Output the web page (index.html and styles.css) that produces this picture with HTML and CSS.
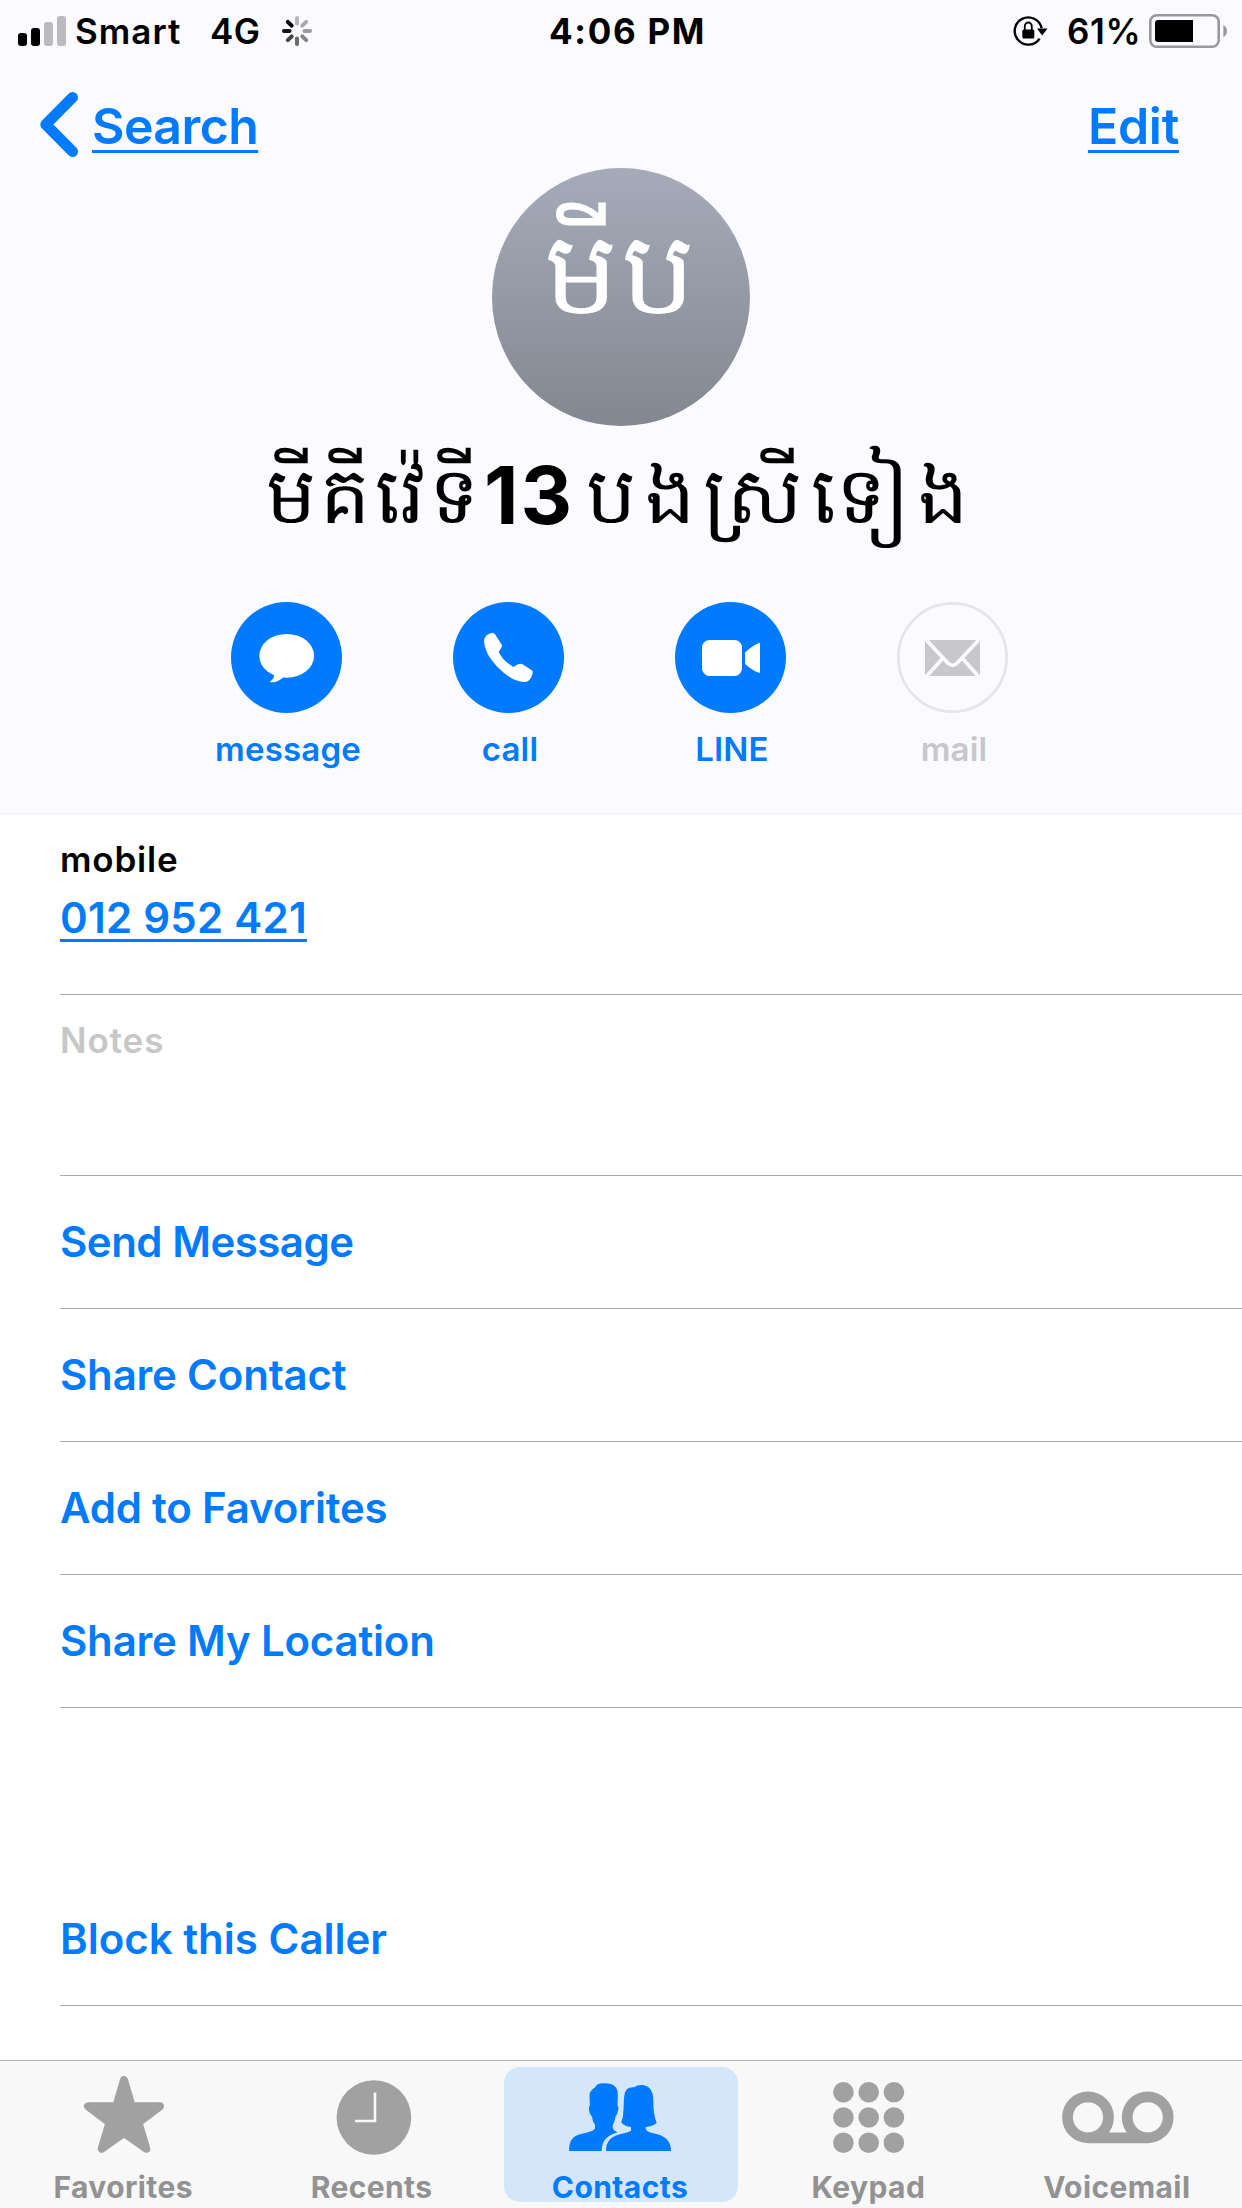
FILE: index.html
```
<!DOCTYPE html>
<html lang="en">
<head>
<meta charset="utf-8">
<title>Contact</title>
<link rel="stylesheet" href="styles.css">
</head>
<body>
<div class="screen">
  <header class="header">
    <div class="status">
      <div class="status-left">
        <svg class="signal" width="48" height="32" viewBox="0 0 48 32">
          <rect x="0" y="18" width="9" height="13" rx="3"/>
          <rect x="13" y="13" width="9" height="18" rx="3"/>
          <rect class="dim" x="26" y="7" width="9" height="24" rx="3"/>
          <rect class="dim" x="39" y="1" width="9" height="30" rx="3"/>
        </svg>
        <span class="carrier">Smart</span>
        <span class="network">4G</span>
        <svg class="spinner" width="30" height="30" viewBox="-15 -15 30 30">
          <path stroke="#b5b5ba" d="M0-7.5V-13"/>
          <path stroke="#aaaaae" d="M5.3-5.3L9.2-9.2"/>
          <path stroke="#9c9ca0" d="M7.5 0H13"/>
          <path stroke="#858588" d="M5.3 5.3L9.2 9.2"/>
          <path stroke="#68686b" d="M0 7.5V13"/>
          <path stroke="#444446" d="M-5.3 5.3L-9.2 9.2"/>
          <path stroke="#111111" d="M-7.5 0H-13"/>
          <path stroke="#000000" d="M-5.3-5.3L-9.2-9.2"/>
        </svg>
      </div>
      <span class="time">4:06 PM</span>
      <div class="status-right">
        <svg class="lock" width="36" height="32" viewBox="0 0 36 32">
          <path d="M28.6 13.2A13.6 13.6 0 1 0 26.6 23.6" fill="none" stroke="#000" stroke-width="2.4"/>
          <path d="M24 13.5H34.5L29.2 20.5Z"/>
          <rect x="9.3" y="14.5" width="12" height="9" rx="1.5"/>
          <path d="M11.8 15V11.3a3.5 3.8 0 0 1 7 0V15" fill="none" stroke="#000" stroke-width="1.8"/>
        </svg>
        <span class="percent">61%</span>
        <svg class="battery" width="79" height="34" viewBox="0 0 79 34">
          <rect x="1.3" y="1.3" width="68.4" height="31.4" rx="6.5" fill="none" stroke="#98989b" stroke-width="2.6"/>
          <path d="M9 6H44V28H9Q6 28 6 25V9Q6 6 9 6Z"/>
          <path d="M74.3 11Q78 13 78 17T74.3 23Z" fill="#98989b"/>
        </svg>
      </div>
    </div>
    <nav class="nav">
      <a class="back">
        <svg width="40" height="67" viewBox="0 0 40 67"><path d="M33.5 6.5L6.8 33.5L33.5 60.5" fill="none" stroke="#007aff" stroke-width="11" stroke-linecap="round" stroke-linejoin="round"/></svg>
        <span class="link">Search</span>
      </a>
      <a class="link edit">Edit</a>
    </nav>
    <div class="avatar">មីប</div>
    <h1 class="name"><span class="name-first">មីគីវ៉េទី</span><span class="name-number">13</span><span class="name-last">បងស្រីទៀង</span></h1>
    <div class="actions">
      <a class="action">
        <svg width="111" height="111" viewBox="0 0 111 111">
          <circle cx="55.5" cy="55.5" r="55.5" fill="#007aff"/>
          <ellipse cx="55.7" cy="53.8" rx="27.4" ry="21.9" fill="#fff"/>
          <path d="M43 72C43.5 76 41 78.5 38.3 80Q46 81.5 52.5 75Z" fill="#fff"/>
        </svg>
        <span class="action-label">message</span>
      </a>
      <a class="action">
        <svg width="111" height="111" viewBox="0 0 111 111">
          <circle cx="55.5" cy="55.5" r="55.5" fill="#007aff"/>
          <path d="M31 39.5Q31 35.5 33.7 33.3Q37 30.8 39.5 30.7Q41 30.7 42 32.2L48.4 42.3Q49.4 44 48.5 45.5L45.7 50Q49.5 58.5 60.3 65L65 62.3Q67.5 61.3 69.5 62.3L78.5 68Q80 69 79.7 71.5Q78.5 76.5 75.5 78.7Q73.5 80 71 80Q58.5 79.5 44 64.5Q31.5 51 31 39.5Z" fill="#fff"/>
        </svg>
        <span class="action-label">call</span>
      </a>
      <a class="action">
        <svg width="111" height="111" viewBox="0 0 111 111">
          <circle cx="55.5" cy="55.5" r="55.5" fill="#007aff"/>
          <rect x="27" y="38" width="40" height="36" rx="7.5" fill="#fff"/>
          <path d="M70 50.5Q78.5 42.5 85 40.7V71Q78.5 69.5 70 62Z" fill="#fff"/>
        </svg>
        <span class="action-label">LINE</span>
      </a>
      <a class="action disabled">
        <svg width="111" height="111" viewBox="0 0 111 111">
          <circle cx="55.5" cy="55.5" r="54.1" fill="none" stroke="#e5e5ea" stroke-width="2.8"/>
          <rect x="28" y="38" width="55" height="36" fill="#c7c7cc"/>
          <path d="M28 36.5L50.5 60.8Q55.5 66 60.5 60.8L83 36.5M46 56L28 76M65 56L83 76" fill="none" stroke="#fbfaff" stroke-width="3.8"/>
        </svg>
        <span class="action-label">mail</span>
      </a>
    </div>
  </header>

  <main class="content">
    <section class="row phone">
      <span class="phone-label">mobile</span>
      <a class="phone-number">012 952 421</a>
    </section>
    <section class="row notes">Notes</section>
    <a class="row command tight">Send Message</a>
    <a class="row command">Share Contact</a>
    <a class="row command">Add to Favorites</a>
    <a class="row command">Share My Location</a>
    <a class="row command block">Block this Caller</a>
  </main>

  <footer class="tabs">
    <a class="tab">
      <svg width="120" height="105" viewBox="0 0 120 105"><path d="M60 13.2L67.7 39.2H96L74.5 55.5L82.3 81.8L60 66L37.7 81.8L45.5 55.5L24 39.2H52.3Z" stroke="#a1a1a1" stroke-width="8" stroke-linejoin="round"/></svg>
      <span>Favorites</span>
    </a>
    <a class="tab">
      <svg width="120" height="105" viewBox="0 0 120 105"><circle cx="60.9" cy="50.5" r="37.3"/><path d="M62 25.5V54H42" fill="none" stroke="#f8f8f8" stroke-width="2.6"/></svg>
      <span>Recents</span>
    </a>
    <a class="tab active">
      <svg width="120" height="105" viewBox="0 0 120 105">
        <path d="M8 84C8 73 12 69 20 67C28 65 34 64 34 60.5V58Q31.5 55 31 49.5Q28.5 47.5 28 42.5Q27.5 39.5 28.8 39L28.5 28Q29 23 34 20.5Q35.5 16.3 42 16.2Q51 16 54 19.5Q57 22 56.8 29L56.5 38.5Q58 40 57 43.5Q56.5 47.5 54.5 49.5Q54 55 51.7 58V60.5Q52.5 64 56.7 65.3C44 69 41 75 40.7 84Z"/>
        <path d="M45 84C45 73.5 51 69.5 58 67.5Q69.5 65 70 63.5V60Q64 59.5 60.3 55.5Q62.5 50 62.5 42L63 31Q63.5 19 73 20.3Q76 18 80.5 18Q92 18.5 92.3 33Q92 47 95.7 56Q91.5 59.5 84.7 60Q84 64.5 91 66C104 68.5 110 73 110 84Z"/>
      </svg>
      <span>Contacts</span>
    </a>
    <a class="tab">
      <svg width="120" height="105" viewBox="0 0 120 105">
        <circle cx="34.4" cy="25.3" r="10.3"/><circle cx="59.7" cy="25.3" r="10.3"/><circle cx="84.9" cy="25.3" r="10.3"/>
        <circle cx="34.4" cy="50.5" r="10.3"/><circle cx="59.7" cy="50.5" r="10.3"/><circle cx="84.9" cy="50.5" r="10.3"/>
        <circle cx="34.4" cy="75.7" r="10.3"/><circle cx="59.7" cy="75.7" r="10.3"/><circle cx="84.9" cy="75.7" r="10.3"/>
      </svg>
      <span>Keypad</span>
    </a>
    <a class="tab">
      <svg width="120" height="105" viewBox="0 0 120 105"><g fill="none" stroke="#a1a1a1" stroke-width="10.8"><circle cx="30" cy="50.3" r="20.5"/><circle cx="89.7" cy="50.3" r="20.5"/><path d="M30 70.8H89.7"/></g></svg>
      <span>Voicemail</span>
    </a>
  </footer>
</div>
</body>
</html>
```
FILE: styles.css
```
* { box-sizing: border-box; }

body {
  margin: 0;
  background: #fff;
  color: #000;
  font-family: Inter, "Noto Sans", sans-serif;
  font-weight: 600;
}

svg { display: block; flex: none; }

.screen {
  display: flex;
  flex-direction: column;
  width: 1242px;
  height: 2208px;
  overflow: hidden;
}

.header {
  height: 814px;
  background: #fbfaff;
  border-bottom: 1px solid #efeff4;
}

/* Status bar */
.status {
  display: grid;
  grid-template-columns: 1fr auto 1fr;
  align-items: center;
  height: 60px;
  padding: 0 14px 0 18px;
  font-size: 35px;
  line-height: 62px;
}
.status-left, .status-right { display: flex; align-items: center; }
.status-right { justify-content: flex-end; }
.signal .dim { fill: #bbbabf; }
.carrier { width: 114px; margin-left: 9px; letter-spacing: 1px; }
.network { width: 50px; margin-left: 21px; letter-spacing: 0.5px; }
.spinner { margin-left: 22px; stroke-width: 4; stroke-linecap: round; }
.time { font-weight: 700; letter-spacing: 1.7px; margin-left: 9px; }
.lock { margin-right: 18px; }
.percent { width: 75px; margin-right: 7px; letter-spacing: 0.6px; }

/* Navigation */
.nav {
  display: flex;
  justify-content: space-between;
  height: 108px;
  padding: 36px 63px 12px 39px;
  font-size: 50px;
  line-height: 60px;
  color: #007aff;
}
.back { display: flex; align-items: center; gap: 13px; }
.back svg { margin-top: -3px; }
.link {
  letter-spacing: -0.6px;
  text-decoration: underline;
  text-decoration-thickness: 3px;
  text-underline-offset: 6px;
  text-decoration-skip-ink: none;
}
.edit { letter-spacing: -0.3px; }

/* Contact identity */
.avatar {
  width: 258px;
  height: 258px;
  margin: 0 auto;
  border-radius: 50%;
  background: linear-gradient(#a5abb9, #838791);
  color: #fff;
  font-size: 117px;
  font-weight: 400;
  letter-spacing: 3px;
  line-height: 208px;
  text-align: center;
}
.name {
  display: flex;
  margin: 0;
  padding-left: 266px;
  font-size: 80px;
  font-weight: 400;
  line-height: 137px;
  white-space: nowrap;
}
.name-first, .name-last { font-size: 79px; }
.name-first { width: 218px; letter-spacing: 4.4px; }
.name-number { width: 102px; font-weight: 700; letter-spacing: 2px; }
.name-last { letter-spacing: 8.6px; }

/* Quick actions */
.actions {
  display: flex;
  margin: 39px 0 0 175.5px;
}
.action {
  display: flex;
  flex-direction: column;
  align-items: center;
  width: 222px;
  color: #007aff;
}
.action-label {
  padding-left: 3px;
  font-size: 33px;
  line-height: 72px;
  letter-spacing: 0.2px;
}
.disabled { color: #c7c7cc; }

/* Details list */
.content { flex: 1; padding-left: 60px; }
.row { display: block; border-bottom: 1px solid #acacac; }
.phone { display: flex; flex-direction: column; align-items: flex-start; height: 181px; padding-top: 20px; }
.phone-label { font-size: 35px; line-height: 50px; letter-spacing: 0.8px; }
.phone-number {
  font-size: 42px;
  line-height: 68px;
  letter-spacing: 0.25px;
  color: #007aff;
  text-decoration: underline;
  text-decoration-thickness: 3px;
  text-underline-offset: 6px;
  text-decoration-skip-ink: none;
}
.notes { height: 181px; padding-top: 20px; font-size: 35px; line-height: 50px; letter-spacing: 0.9px; color: #c7c7c7; }
.command { height: 133px; font-size: 42px; line-height: 132px; letter-spacing: -0.2px; color: #007aff; }
.tight { letter-spacing: -0.5px; }
.block { margin-top: 165px; letter-spacing: 0; }

/* Tab bar */
.tabs {
  display: grid;
  grid-template-columns: repeat(5, 1fr);
  height: 148px;
  padding-top: 6px;
  background: #f8f8f8;
  border-top: 1px solid #b2b2b2;
}
.tab {
  display: flex;
  flex-direction: column;
  align-items: center;
  justify-self: center;
  width: 234px;
  height: 135px;
  fill: #a1a1a1;
  color: #929292;
  font-size: 30px;
  font-weight: 700;
  line-height: 30px;
  letter-spacing: 0.4px;
}
.tab span { padding-right: 2px; }
.active {
  border-radius: 16px;
  background: #d4e6fa;
  color: #007aff;
  fill: #007aff;
}
```
